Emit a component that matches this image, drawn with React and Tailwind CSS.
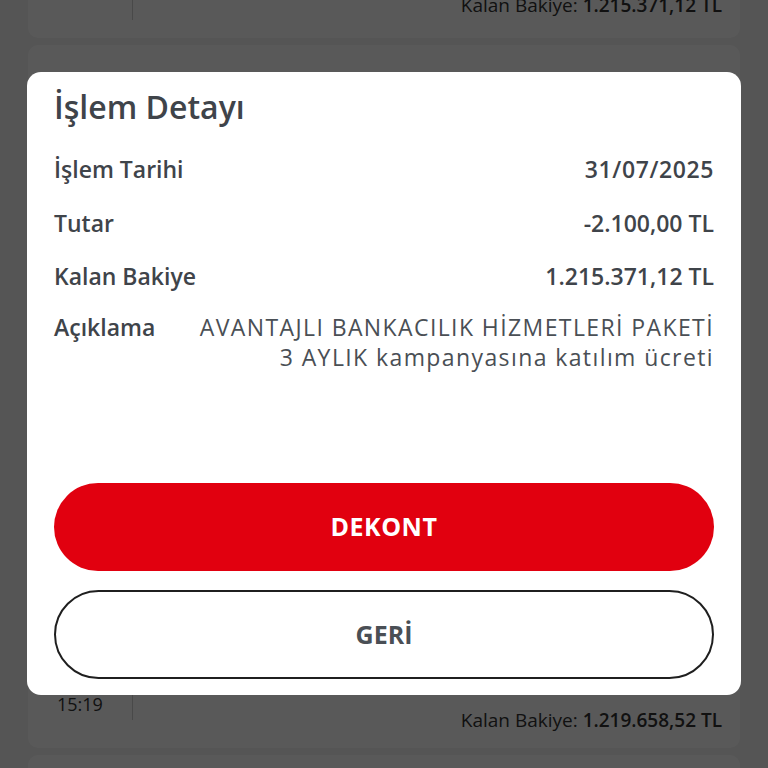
export default function App() {
  const font = { fontFamily: '"Open Sans", "Liberation Sans", sans-serif' };

  return (
    <div className="relative w-[768px] h-[768px] overflow-hidden bg-[#f2f2f2]" style={font}>
      {/* background transaction list */}
      <div className="flex flex-col gap-[7px] px-[28px]">
        <div className="h-[38px] rounded-b-[10px] bg-white flex items-end">
          <div className="w-[105px] h-[20px] border-r border-[#d0d0d0] self-start" />
          <div className="flex-1 flex justify-end items-center pr-[18px] pb-[19px] text-[19px] text-[#333]">
            Kalan Bakiye:&nbsp;<span className="font-semibold">1.215.371,12 TL</span>
          </div>
        </div>
        <div className="h-[703px] rounded-[10px] bg-white flex flex-col">
          <div className="flex items-center justify-between pl-[126px] pr-[22px] pt-[20px] text-[19px] text-[#333]">
            <span>Kredi Aktarım Taraması Havale</span>
            <span className="font-semibold">1.848,48 TL</span>
          </div>
          <div className="flex-1" />
          <div className="flex h-[58px]">
            <div className="w-[105px] border-r border-[#d0d0d0] h-[30px] pl-[29px] text-[18px] text-[#333] leading-[20px] pt-[4px]">
              15:19
            </div>
            <div className="flex-1 flex justify-end pt-[16px] pr-[18px] text-[19px] text-[#333]">
              Kalan Bakiye:&nbsp;<span className="font-semibold">1.219.658,52 TL</span>
            </div>
          </div>
        </div>
        <div className="h-[40px] rounded-t-[10px] bg-white" />
      </div>

      {/* dim overlay */}
      <div className="absolute inset-0 bg-black/65" />

      {/* modal */}
      <div className="absolute left-[27px] top-[72px] w-[714px] h-[623px] rounded-[14px] bg-white flex flex-col px-[27px] pb-[16px]">
        <h1 className="pt-[15px] text-[32px] font-semibold text-[#3f444a] leading-[40px]">İşlem Detayı</h1>

        <div className="mt-[27px] flex flex-col text-[23px] font-semibold text-[#3f444a] leading-[31px]">
          <div className="flex justify-between">
            <span>İşlem Tarihi</span>
            <span className="tracking-[0.6px]">31/07/2025</span>
          </div>
          <div className="flex justify-between mt-[23px]">
            <span>Tutar</span>
            <span>-2.100,00 TL</span>
          </div>
          <div className="flex justify-between mt-[22px]">
            <span>Kalan Bakiye</span>
            <span>1.215.371,12 TL</span>
          </div>
          <div className="flex justify-between gap-[24px] mt-[20px]">
            <span>Açıklama</span>
            <span className="text-right font-normal text-[23px] tracking-[1.4px] leading-[30px] text-[#4a4f55]">
              AVANTAJLI BANKACILIK HİZMETLERİ PAKETİ
              <br />3 AYLIK kampanyasına katılım ücreti
            </span>
          </div>
        </div>

        <div className="flex-1" />

        <div className="flex flex-col gap-[19px]">
          <button className="h-[88px] rounded-full bg-[#e1000f] text-white text-[25px] font-bold tracking-[0.5px]">
            DEKONT
          </button>
          <button className="h-[89px] rounded-full border-2 border-[#1f1f1f] bg-white text-[#4a4f55] text-[25px] font-bold">
            GERİ
          </button>
        </div>
      </div>
    </div>
  );
}
